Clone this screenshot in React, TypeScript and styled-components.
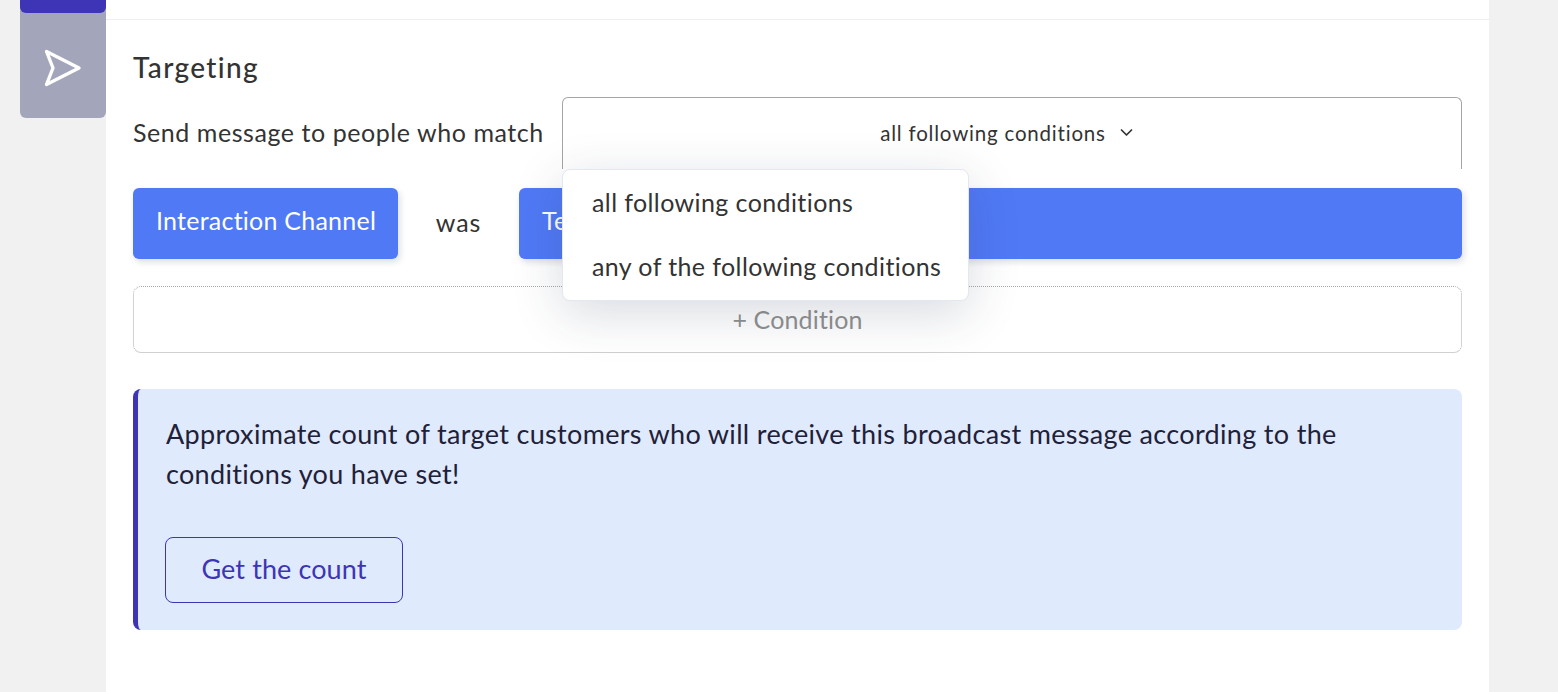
import React from "react";
import styled, { createGlobalStyle } from "styled-components";

const Global = createGlobalStyle`
  html, body { margin: 0; padding: 0; height: 100%; background: #f1f1f1; overflow: hidden; }
  * { box-sizing: border-box; }
  body { font-family: Lato, "Noto Sans", sans-serif; color: #333; }
`;

const Page = styled.div`
  display: flex;
  width: 1558px;
  height: 692px;
  overflow: hidden;
`;
const Rail = styled.nav`
  width: 106px;
  padding-left: 20px;
  flex: none;
  display: flex;
  flex-direction: column;
`;
const ActiveTab = styled.div`
  position: relative;
  z-index: 1;
  height: 13px;
  background: #3d35b5;
  border-radius: 0 0 6px 6px;
`;
const SendTab = styled.div`
  height: 111px;
  margin-top: -6px;
  padding-top: 10px;
  background: #a3a6ba;
  border-radius: 0 0 6px 6px;
  display: flex;
  align-items: center;
  justify-content: center;
  color: #fff;
`;
const Main = styled.main`
  width: 1383px;
  flex: none;
  background: #fff;
`;
const TopBand = styled.div`
  height: 20px;
  border-bottom: 1px solid #eeeeee;
`;
const Section = styled.section`
  padding: 29px 27px 0 27px;
  display: flex;
  flex-direction: column;
`;
const Title = styled.h2`
  margin: 0 0 12px;
  font-size: 28px;
  line-height: 36px;
  font-weight: 500;
  color: #333;
  letter-spacing: 1.35px;
`;
const MatchRow = styled.div`
  display: flex;
  align-items: center;
  gap: 19px;
`;
const Label = styled.span`
  font-size: 25px;
  line-height: 34px;
  letter-spacing: 0.56px;
  white-space: nowrap;
  width: 410px;
  flex: none;
  padding-bottom: 2px;
`;
const SelectWrap = styled.div`
  position: relative;
  flex: 1;
`;
const Select = styled.div`
  height: 72px;
  border: 1px solid #a5a5a5;
  border-bottom: none;
  border-radius: 6px 6px 0 0;
  background: #fff;
  display: flex;
  align-items: center;
  justify-content: center;
  gap: 13px;
  font-size: 20.5px;
  letter-spacing: 0.8px;
  color: #333;
  padding: 0 10px 2px 0;
`;
const Menu = styled.ul`
  position: absolute;
  z-index: 5;
  left: 0;
  top: 72px;
  width: 407px;
  height: 132px;
  margin: 0;
  padding: 0;
  list-style: none;
  background: #fff;
  border: 1px solid #e2e7f0;
  border-radius: 8px;
  box-shadow: 0 12px 50px rgba(40, 50, 80, 0.18);
`;
const MenuItem = styled.li`
  height: 64px;
  padding-left: 29px;
  display: flex;
  align-items: center;
  font-size: 25px;
  letter-spacing: 0.4px;
  color: #333;
  white-space: nowrap;
`;
const ConditionRow = styled.div`
  display: flex;
  align-items: center;
  margin-top: 19px;
`;
const Chip = styled.div<{ $grow?: boolean }>`
  height: 71px;
  flex: ${(p) => (p.$grow ? 1 : "none")};
  padding: 0 22px 0 23px;
  background: #5079f6;
  color: #fff;
  border-radius: 6px;
  font-size: 25px;
  line-height: 64px;
  letter-spacing: 0.24px;
  box-shadow: 2px 3px 6px rgba(60, 70, 110, 0.18);
  white-space: nowrap;
`;
const Was = styled.span`
  width: 121px;
  text-align: center;
  font-size: 25px;
  letter-spacing: 0.9px;
  padding-bottom: 3px;
`;
const AddCondition = styled.div`
  margin-top: 27px;
  height: 67px;
  border: 1px dotted #a8a8a8;
  border-bottom-style: solid;
  border-bottom-color: #d0d0d0;
  border-radius: 8px;
  display: flex;
  align-items: center;
  justify-content: center;
  font-size: 25px;
  letter-spacing: 0.14px;
  color: #909090;
  padding-bottom: 2px;
`;
const Notice = styled.div`
  margin-top: 36px;
  height: 241px;
  background: #dfeafd;
  border-left: 5px solid #3d35b5;
  border-radius: 8px;
  padding: 25px 27px 0 28px;
`;
const NoticeText = styled.p`
  margin: 0 0 43px -1px;
  padding-left: 1px;
  font-size: 27px;
  line-height: 40px;
  letter-spacing: 0.33px;
  color: #1f2138;
`;
const CountButton = styled.button`
  width: 238px;
  height: 66px;
  margin-left: -1px;
  background: transparent;
  border: 1px solid #3d35b5;
  border-radius: 8px;
  font: inherit;
  font-size: 27px;
  letter-spacing: 0.1px;
  color: #3d35b5;
  padding: 0 0 4px;
`;

export default function App() {
  return (
    <>
      <Global />
      <Page>
        <Rail>
          <ActiveTab />
          <SendTab>
            <svg width="38" height="38" viewBox="0 0 38 38" fill="none" stroke="currentColor" strokeWidth="3.4" strokeLinejoin="round" strokeLinecap="round">
              <path d="M2.5 2.5 L35 19 L2.5 35.5 L9 19 Z" />
            </svg>
          </SendTab>
        </Rail>
        <Main>
          <TopBand />
          <Section>
            <Title>Targeting</Title>
            <MatchRow>
              <Label>Send message to people who match</Label>
              <SelectWrap>
                <Select>
                  all following conditions
                  <svg width="15" height="15" viewBox="0 0 15 15" fill="none" stroke="#333" strokeWidth="1.7" strokeLinecap="round" strokeLinejoin="round">
                    <path d="M2.5 5 L7.5 10 L12.5 5" />
                  </svg>
                </Select>
                <Menu>
                  <MenuItem>all following conditions</MenuItem>
                  <MenuItem>any of the following conditions</MenuItem>
                </Menu>
              </SelectWrap>
            </MatchRow>
            <ConditionRow>
              <Chip>Interaction Channel</Chip>
              <Was>was</Was>
              <Chip $grow>Telegram</Chip>
            </ConditionRow>
            <AddCondition>+ Condition</AddCondition>
            <Notice>
              <NoticeText>
                Approximate count of target customers who will receive this broadcast message according to the conditions you have set!
              </NoticeText>
              <CountButton>Get the count</CountButton>
            </Notice>
          </Section>
        </Main>
      </Page>
    </>
  );
}
